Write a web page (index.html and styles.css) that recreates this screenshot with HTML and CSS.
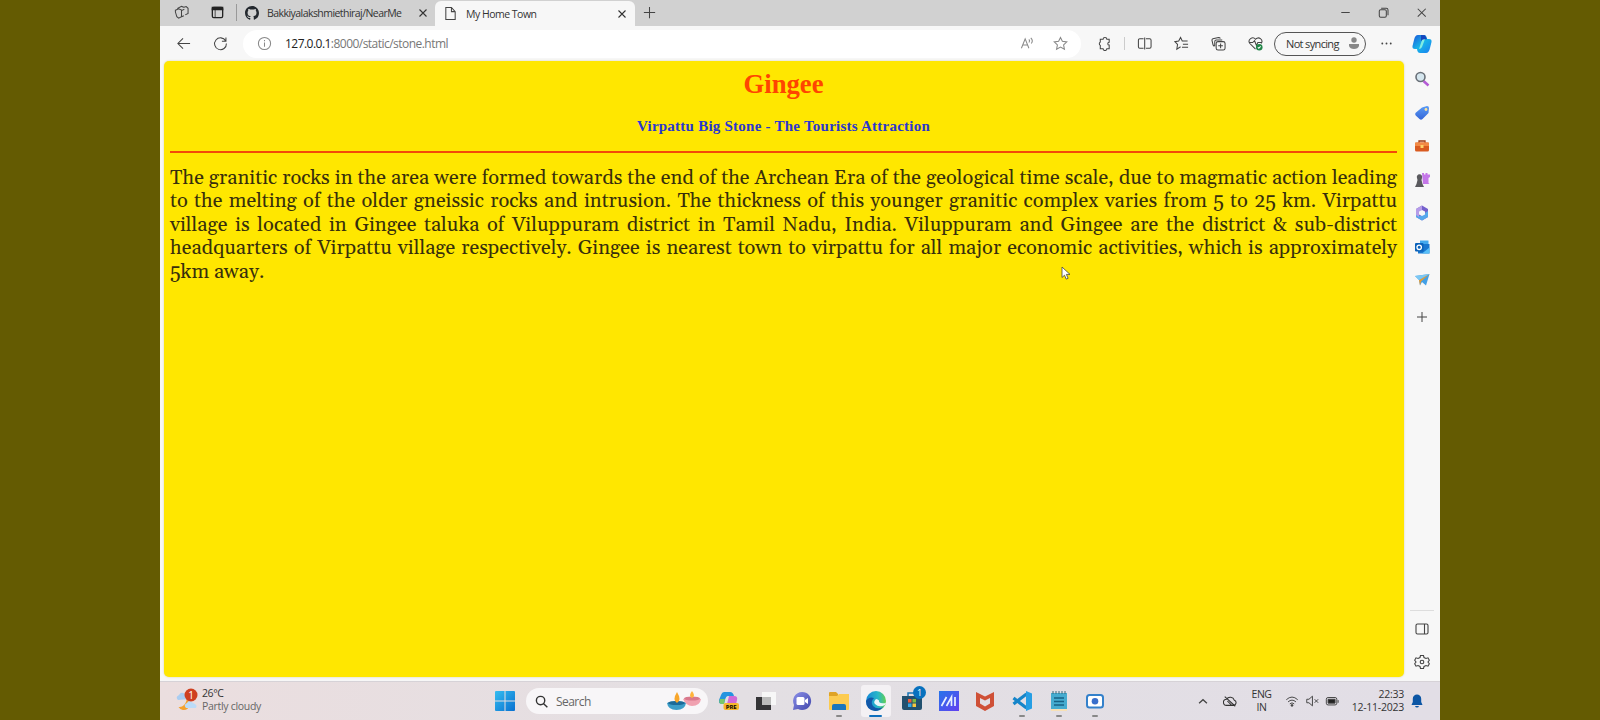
FILE: index.html
```html
<!DOCTYPE html>
<html lang="en">
<head>
<meta charset="utf-8">
<title>My Home Town</title>
<link rel="stylesheet" href="styles.css">
</head>
<body>
<svg width="0" height="0" class="defs">
  <defs>
    <linearGradient id="win" x1="0" y1="0" x2="1" y2="1"><stop offset="0" stop-color="#35bdf0"/><stop offset="1" stop-color="#0870d0"/></linearGradient>
    <linearGradient id="violet" x1="0" y1="0" x2="1" y2="1"><stop offset="0" stop-color="#8b8fe8"/><stop offset="1" stop-color="#4248ac"/></linearGradient>
    <linearGradient id="asus" x1="0" y1="0" x2="1" y2="1"><stop offset="0" stop-color="#2674ea"/><stop offset="1" stop-color="#6340f0"/></linearGradient>
    <linearGradient id="cop" x1="0" y1="0" x2="1" y2="1"><stop offset="0" stop-color="#1c54d8"/><stop offset=".5" stop-color="#18b4e8"/><stop offset="1" stop-color="#1a7cf0"/></linearGradient>
    <linearGradient id="edge" x1="0" y1="0" x2="1" y2="0"><stop offset="0" stop-color="#1588d8"/><stop offset=".6" stop-color="#28b8c8"/><stop offset="1" stop-color="#62cf52"/></linearGradient>
    <linearGradient id="tag" x1="0" y1="0" x2="0" y2="1"><stop offset="0" stop-color="#5b9cf5"/><stop offset="1" stop-color="#3566d8"/></linearGradient>
  </defs>
</svg>
<div class="screen">
  <header class="tabs">
    <span class="cell w44"><svg class="ic" viewBox="0 0 16 16"><path d="M1.500 5.500 5 4l3 1.500v7L5 14l-2-1.500-1.500-5zM4 4.300V3.500L8 1.500l2.500 1M8 6l3-1.500M8 12.500l2.500-1M10.500 2.500l2.500-.8 2 1.800v5.500l-3 1.500"/></svg></span>
    <span class="cell w28"><svg class="ic bold" viewBox="0 0 16 16"><rect x="2.500" y="2.500" width="11" height="11" rx="1.500"/><path d="M2.500 2.500h11v2.500h-11z" fill="#222"/><path stroke-width=".8" d="M5.500 5v8"/></svg></span>
    <i class="vline"></i>
    <div class="tab idle">
      <svg class="gh" viewBox="0 0 16 16"><path fill="#24292f" d="M8 0C3.580 0 0 3.580 0 8c0 3.540 2.290 6.530 5.470 7.590.4.070.55-.17.55-.38v-1.490c-2.010.37-2.530-.49-2.690-.94-.09-.23-.48-.94-.82-1.130-.28-.15-.68-.52-.01-.53.63-.01 1.080.58 1.230.82.72 1.210 1.870.87 2.330.66.07-.52.28-.87.51-1.070-1.780-.2-3.640-.89-3.640-3.950 0-.87.31-1.590.82-2.150-.08-.2-.36-1.020.08-2.120 0 0 .67-.21 2.200.82a7.600 7.600 0 0 1 4 0c1.530-1.040 2.200-.82 2.200-.82.44 1.100.16 1.920.08 2.120.51.56.82 1.270.82 2.150 0 3.070-1.870 3.750-3.650 3.950.29.25.54.73.54 1.480v2.200c0 .21.15.46.55.38A8 8 0 0 0 16 8c0-4.420-3.580-8-8-8z"/></svg>
      <span class="t1">Bakkiyalakshmiethiraj/NearMe</span>
      <svg class="x" viewBox="0 0 10 10"><path d="m1.500 1.500 7 7m0-7-7 7"/></svg>
    </div>
    <div class="tab active">
      <svg class="ic" viewBox="0 0 16 16"><path d="M3 1.500h6L13 6v8.500H3zM9 1.500V6h4"/></svg>
      <span class="t2">My Home Town</span>
      <svg class="x" viewBox="0 0 10 10"><path d="m1.500 1.500 7 7m0-7-7 7"/></svg>
    </div>
    <span class="cell w30"><svg class="ic" viewBox="0 0 16 16"><path d="M8 2v12M2 8h12"/></svg></span>
    <div class="winbtns">
      <span class="cell w38"><svg class="ic" viewBox="0 0 16 16"><path d="M3.500 8h9"/></svg></span>
      <span class="cell w38"><svg class="ic" viewBox="0 0 16 16"><rect x="3.500" y="5" width="7.500" height="8" rx="1.500"/><path d="M5.500 3.500H11a1.800 1.800 0 0 1 1.800 1.800V11"/></svg></span>
      <span class="cell w38"><svg class="ic" viewBox="0 0 16 16"><path d="m4 4 8.500 8.500m0-8.500L4 12.500"/></svg></span>
    </div>
  </header>

  <div class="toolbar">
    <span class="cell w46"><svg class="ic" viewBox="0 0 16 16"><path d="M15 8H2m5.500-5.500L2 8l5.500 5.500"/></svg></span>
    <span class="cell w28"><svg class="ic" viewBox="0 0 16 16"><path d="M13.500 5.200A6.300 6.300 0 1 0 14.300 8M13.800 1.500v4H9.500"/></svg></span>
    <div class="address">
      <svg class="ic pale" viewBox="0 0 16 16"><circle cx="8" cy="8" r="6.500"/><path d="M8 7v4.500M8 4.300v1.200"/></svg>
      <span class="url"><b>127.0.0.1</b>:8000/static/stone.html</span>
      <svg class="ic pale reader" viewBox="0 0 16 16"><path d="m1.500 13 4-10 4 10M3 9.500h5M9.500 3.500q1.500 1.500 0 3.500M11.500 2q3 3 .500 6"/></svg>
      <svg class="ic pale" viewBox="0 0 16 16"><path d="m8 1.500 2 4.200 4.700.6-3.400 3.200.9 4.700L8 11.900l-4.200 2.300.9-4.700L1.300 6.300 6 5.700z"/></svg>
    </div>
    <span class="cell w38"><svg class="ic" viewBox="0 0 16 16"><path d="M3.500 3.500h3a2 2 0 0 1 4 0H13v3.200a1.500 1.500 0 0 0 0 3v3.800h-2.500a2 2 0 0 1-4 0h-3V10a2 2 0 0 1 0-3.500z"/></svg></span>
    <i class="tline"></i>
    <span class="cell w37"><svg class="ic" viewBox="0 0 16 16"><path d="M7 3H3a1.500 1.500 0 0 0-1.500 1.500v7A1.500 1.500 0 0 0 3 13h4M9.500 3h4A1.500 1.500 0 0 1 15 4.500v7a1.500 1.500 0 0 1-1.500 1.500h-4M8.200 1.500v13"/></svg></span>
    <span class="cell w37"><svg class="ic" viewBox="0 0 16 16"><path d="M7 11.500 3 14l.8-5L1 6l4-.6L7 1.500l1.800 3.900h5.700M9.500 8.700h5.500M8.500 12H15"/></svg></span>
    <span class="cell w37"><svg class="ic" viewBox="0 0 16 16"><path d="M3.500 11 2.200 9.500 1 4.500Q1 3.300 2 3l6-1.500q1.500 0 2 1.200M4 11V6a1.700 1.700 0 0 1 1.700-1.700H12"/><rect x="5.500" y="6" width="9.500" height="9" rx="2"/><path d="M10.250 8v5M7.700 10.500h5"/></svg></span>
    <span class="cell w37"><svg class="ic" viewBox="0 0 16 16"><path d="M8 14 2 8a3.500 3.500 0 0 1 6-4.500A3.500 3.500 0 0 1 14 8M1 7h4l2-2 2 5 1.500-3H15"/><circle cx="12" cy="12" r="3.500" fill="#238548" stroke="none"/><path d="m10.500 12 1 1 2-2" stroke="#fff"/></svg></span>
    <div class="sync"><span>Not syncing</span><svg viewBox="0 0 10 12"><circle cx="5" cy="3" r="2.700"/><path d="M0 7h10v2q-1 3-5 3T0 9z"/></svg></div>
    <span class="cell w40"><svg class="ic" viewBox="0 0 16 16"><g fill="#444" stroke="none"><circle cx="3.500" cy="8" r="1"/><circle cx="8" cy="8" r="1"/><circle cx="12.500" cy="8" r="1"/></g></svg></span>
    <span class="cell w32"><svg class="big" viewBox="0 0 20 20"><path fill="url(#cop)" d="M6 1h6q2 0 2.600 2l.6 2H17q3 0 2.500 3l-1.500 6q-1 5-4 5H8q-2 0-2.600-2L5 15H3q-3 0-2.500-3L2 6q1-5 4-5z"/><path fill="#82ece2" d="m10 6-3 9q2 0 3-2l3-8q-2-1-3 1z"/><path fill="#1546bd" d="m9 1 4 .200 2 4h-3q-2 0-3 2z"/></svg></span>
  </div>

  <div class="middle">
    <main class="page">
      <h1>Gingee</h1>
      <h2>Virpattu Big Stone - The Tourists Attraction</h2>
      <hr>
      <div class="story">
        <p>The granitic rocks in the area were formed towards the end of the Archean Era of the geological time scale, due to magmatic action leading</p>
        <p>to the melting of the older gneissic rocks and intrusion. The thickness of this younger granitic complex varies from 5 to 25 km. Virpattu</p>
        <p>village is located in Gingee taluka of Viluppuram district in Tamil Nadu, India. Viluppuram and Gingee are the district &amp; sub-district</p>
        <p>headquarters of Virpattu village respectively. Gingee is nearest town to virpattu for all major economic activities, which is approximately</p>
        <p class="last">5km away.</p>
      </div>
      <svg class="cursor" viewBox="0 0 10 14"><path d="M1 1v10.500l2.500-2.300 1.700 3.900 1.900-.8-1.700-3.900H9z" fill="#fff" stroke="#444" stroke-width=".8"/></svg>
    </main>
    <aside class="side">
      <svg viewBox="0 0 16 16"><path d="m9.500 10 5 4.500" stroke="#b45bd5" stroke-width="2.500"/><circle cx="6.500" cy="6" r="4.500" fill="#d5e6ee" stroke="#697078" stroke-width="1.600"/></svg>
      <svg viewBox="0 0 16 16"><path fill="url(#tag)" d="M8 2.500 13 1q2 0 2 2l-.5 5-6 6q-1.500 1.500-3 0L1.700 10.500q-1.200-1.500 0-2.700z"/><circle cx="12" cy="4.500" r="1.400" fill="#ffe39a"/></svg>
      <svg viewBox="0 0 16 16"><path d="M5 5V3h6v2" fill="none" stroke="#9d3b15" stroke-width="1.300"/><rect x="1" y="4.500" width="14" height="9" rx="1.500" fill="#d95b20"/><path fill="#f28a45" d="M1 4.500h14V8H1z"/><rect x="6.500" y="7" width="3" height="3" fill="#ffd268"/></svg>
      <svg viewBox="0 0 16 16"><path fill="#c477e8" d="M8 1h2v1.500h1.500V1h2v1.500H16V5l-1.500 1v5l1 1H9z"/><path fill="#5a5a5e" d="M3 6a2.700 2.700 0 1 1 5 0L7.500 8l1 4 1.500 3H1l1.500-3 1-4z"/></svg>
      <svg viewBox="0 0 16 16"><path fill="#7460cc" d="m8 .500 6 3.500v8l-6 3.500-6-3.500V4z"/><path fill="#55a8ec" d="m8 15.500-6-3.500V9l4 2 8-5v6z"/><path fill="#b69ce8" d="m2 4 6-3.500V5L5 7v5l-3-2z"/><path fill="#f7f7f7" d="m8 5 3 1.500v3L8 11 5 9.500v-3z"/></svg>
      <svg viewBox="0 0 16 16"><path fill="#42a8ee" d="M6 1.500h8.500V8H6z"/><path fill="#1976cf" d="M4 5h11.500v9.500H4z"/><path fill="#58bff8" d="m8 14.500 7.500-6v6z"/><rect x="1" y="4" width="8.500" height="8.500" rx="1" fill="#0b62ba"/><circle cx="5.200" cy="8.300" r="2.200" fill="none" stroke="#fff" stroke-width="1.300"/></svg>
      <svg viewBox="0 0 16 16"><path fill="#43a0e6" d="M1 4 15.500 2 12 13.500 8 10l-2 3.500L5 8z"/><path fill="#e99b2f" d="M5 8 15.500 2 7 9.500l-1 4z"/><path fill="#7cc8f4" d="M1 4 15.500 2 5 8z"/></svg>
      <svg class="plus" viewBox="0 0 16 16"><path d="M8 3v10M3 8h10" fill="none" stroke="#444"/></svg>
      <i></i>
      <svg class="line" viewBox="0 0 16 16"><rect x="2" y="3" width="12" height="10" rx="1.500"/><path d="M10.500 3v10"/></svg>
      <svg class="line" viewBox="0 0 16 16"><path d="m6.500 1.500-.5 2-2 1-2-.7L.7 6.200 2 8l-1.300 1.800L2 12.200l2-.7 2 1 .5 2h3l.5-2 2-1 2 .7 1.300-2.400L14 8l1.300-1.800L14 3.800l-2 .7-2-1-.5-2z"/><circle cx="8" cy="8" r="1.800"/></svg>
    </aside>
  </div>

  <footer class="taskbar">
    <div class="weather">
      <svg viewBox="0 0 22 24"><path d="M11 11a6 6 0 1 1-8.500 8q6 1 8.500-8z" fill="#f4a22e"/><path fill="#a9cdf2" d="M2 12q-3-3 1-5 2-4 6-1 5 0 4 5z"/><path fill="#bcdcf8" d="M10 20q-3-3 1-5 2-4 6 0 5 2 3 5z"/><circle cx="15" cy="7" r="6.500" fill="#cf4020"/><text x="15" y="10.500" text-anchor="middle" font-size="10" fill="#fff">1</text></svg>
      <div><span class="deg">26°C</span><span class="pc">Partly cloudy</span></div>
    </div>
    <svg class="start" viewBox="0 0 20 20"><path fill="url(#win)" d="M0 1q0-1 1-1h8.500v9.500H0zM10.500 0H19q1 0 1 1v8.500h-9.500zM0 10.500h9.500V20H1q-1 0-1-1zM10.500 10.500H20V19q0 1-1 1h-8.500z"/></svg>
    <div class="search">
      <svg class="glass" viewBox="0 0 14 14"><circle cx="6" cy="6" r="4.500"/><path d="m9.300 9.300 4 4"/></svg>
      <span>Search</span>
      <svg class="lamps" viewBox="0 0 34 20"><path fill="#f0a1b0" d="M16 8q9-3 18 0-1 7-9 7-6 0-9-7z"/><ellipse cx="25" cy="7.500" rx="8" ry="2" fill="#d9788c"/><path fill="#ffb33b" d="M25 0q4 5 0 7-4-2 0-7z"/><path fill="#3b9dc8" d="M0 12q9-4 19 0-1 7-9.500 7T0 12z"/><ellipse cx="9.500" cy="12" rx="8.500" ry="2" fill="#1c6a98"/><path fill="#f8a62b" d="M10 1q5 8 0 11-5-3 0-11z"/></svg>
    </div>
    <div class="apps">
      <span><svg viewBox="0 0 20 20"><path fill="#2494df" d="M5 1h6q3 0 4 4H9q-2 0-3 4l-1 4H3q-4 0-3-4l2-5q1-3 3-3z"/><path fill="#78c86a" d="M1 8h5l-1 5H3q-4 0-2-5z"/><path fill="#cf6ad6" d="M10 5h5q4 0 3 4l-1 4H8z"/><rect x="4.500" y="12" width="15.500" height="7" rx="2" fill="#f7b72c"/><text x="12.200" y="17.800" text-anchor="middle" font-size="6" font-weight="700">PRE</text></svg></span>
      <span><svg viewBox="0 0 20 20"><path fill="#f7f7f7" d="M6 1h14v13H6z"/><path fill="#343436" d="M0 6h15v13H0z"/><path fill="#bbb" d="M6 6h9v8H6z"/></svg></span>
      <span><svg viewBox="0 0 20 20"><path fill="url(#violet)" d="M10 1a9 9 0 1 1-4 17l-5 1 1-5a9 9 0 0 1 8-13z"/><rect x="4.500" y="6" width="8" height="8" rx="1.500" fill="#fff"/><path fill="#fff" d="m13 9 3-2v6l-3-2z"/></svg></span>
      <span class="run"><svg viewBox="0 0 20 20"><path fill="#dfa326" d="M0 2q0-1 1-1h6l2 2v4H0z"/><path fill="#fccb50" d="M0 5h8l2-2h10v15q0 1-1 1H1q-1 0-1-1z"/><path fill="#1976bd" d="M3 15q0-2 2-2h10q2 0 2 2v4H3z"/></svg></span>
      <span class="run on"><svg viewBox="0 0 20 20"><circle cx="10" cy="10" r="10" fill="url(#edge)"/><path fill="#1258a9" d="M0 10q3-5 8-3-4 4-1 8 4 4 10 1-3 4-8 4-9-1-9-10z"/><path fill="#eaf7fa" d="M10 8q-3 3-1 5 4 4 10 1l1-2q-5 1-7-1 1-2-3-3z"/></svg></span>
      <span><svg viewBox="0 0 20 20"><path d="M6 5V2h8v3" fill="none" stroke="#1976b7" stroke-width="1.500"/><path fill="#22506f" d="M0 5h20v12q0 2-2 2H2q-2 0-2-2z"/><path fill="#f05a37" d="M6 8h3.500v3.500H6z"/><path fill="#7dbb42" d="M10.500 8H14v3.500h-3.500z"/><path fill="#35a8e9" d="M6 12.500h3.500V16H6z"/><path fill="#f8c740" d="M10.500 12.500H14V16h-3.500z"/></svg><b class="badge">1</b></span>
      <span><svg viewBox="0 0 20 20"><path fill="url(#asus)" d="M0 0h20v20H0z"/><path d="m2.500 15 5-9M7.500 15l5-9v9M16 6v9" fill="none" stroke="#e8f0ff" stroke-width="1.700"/></svg></span>
      <span><svg viewBox="0 0 20 20"><path fill="#cf5037" d="m1 1 9 4.500L19 1v14l-9 5-9-5zm4 6v5.500l5 3 5-3V7l-5 2.500z"/></svg></span>
      <span class="run"><svg viewBox="0 0 20 20"><path d="m1.500 7 13 10M1.500 13l13-10" stroke="#1685c9" stroke-width="3.200"/><path fill="#269ee4" d="m14 0 6 2.500v15L14 20z"/></svg></span>
      <span class="run"><svg viewBox="0 0 20 20"><path fill="#45acd0" d="M2 2h16v16H2z"/><path fill="#f7e0b5" d="M2 18h16v2H2z"/><path d="M5 7h10M5 10.500h10M5 14h10" stroke="#176285" stroke-width="1.300"/><path d="M4 0v3m3-3v3m3-3v3m3-3v3m3-3v3" stroke="#376b7e"/></svg></span>
      <span class="run"><svg viewBox="0 0 20 20"><rect x="2" y="4" width="16" height="12.500" rx="2.500" fill="#fff" stroke="#3481cb" stroke-width="2"/><circle cx="10" cy="10.200" r="3.300" fill="#396fcb"/></svg></span>
    </div>
    <div class="tray">
      <span class="cell w26"><svg class="ic" viewBox="0 0 16 16"><path d="m3.500 10.500 4.500-4 4.500 4" stroke-width="1.400"/></svg></span>
      <span class="cell w28"><svg class="ic cloud" viewBox="0 0 16 16"><path d="M4 13h8a3 3 0 0 0 1-5.800A5 5 0 0 0 4 6a3.500 3.500 0 0 0 0 7zM2 3l12 11M5 8l5 5"/></svg></span>
      <div class="lang"><span>ENG</span><span>IN</span></div>
      <span class="cell w20"><svg class="ic" viewBox="0 0 16 16"><path d="M1.500 6.500q6.500-6 13 0M3.500 9q4.500-4 9 0M5.500 11.300q2.500-2.300 5 0"/><circle cx="8" cy="13" r="1" fill="#333"/></svg></span>
      <span class="cell w20"><svg class="ic" viewBox="0 0 16 16"><path d="M2 6h2.500l4-3.500v11L4.500 10H2zM11 6l4 4m0-4-4 4"/></svg></span>
      <span class="cell w20"><svg class="ic" viewBox="0 0 16 16"><rect x="1.500" y="4" width="12" height="8.500" rx="2"/><path fill="#222" d="M3.500 6h8v4.500h-8z"/><path d="M15 7v3"/></svg></span>
      <div class="clock"><span>22:33</span><span>12-11-2023</span></div>
      <svg class="bell" viewBox="0 0 12 14"><path fill="#0c56a5" d="M6 .500a4.200 4.200 0 0 1 4.200 4.200v3.300l1.300 3H.5l1.300-3V4.700A4.200 4.200 0 0 1 6 .500zM4 12h4q-.5 1.500-2 1.500T4 12z"/></svg>
    </div>
  </footer>
</div>
</body>
</html>
```
FILE: styles.css
```css
* { box-sizing: border-box; }
body { margin: 0; background: #645b02; font-family: "Open Sans", "Noto Sans", sans-serif; color: #333; }
.defs { position: absolute; }
.screen { width: 1280px; height: 720px; margin: 0 auto; background: #f7f7f7; display: flex; flex-direction: column; overflow: hidden; }
svg { display: block; flex: none; }
span { white-space: nowrap; }
.cell { display: flex; align-items: center; justify-content: center; flex: none; }
.w20 { width: 20px; } .w26 { width: 26px; } .w28 { width: 28px; } .w30 { width: 29px; } .w32 { width: 31px; }
.w37 { width: 37px; } .w38 { width: 38px; } .w40 { width: 40px; } .w44 { width: 43px; } .w46 { width: 46px; }
.ic { width: 15px; height: 15px; fill: none; stroke: #444; stroke-width: 1.1; }
.ic.bold { stroke: #222; stroke-width: 1.4; }
.ic.pale { stroke: #888; }
.big { width: 20px; height: 20px; }

.tabs { height: 26px; flex: none; background: #d1d1d1; display: flex; align-items: center; padding-bottom: 1px; }
.tabs .w28 { margin-right: 5px; }
.vline { width: 1px; height: 17px; background: #999; }
.tab { height: 26px; display: flex; align-items: center; font-size: 10.5px; }
.idle { width: 198px; padding: 0 7px 0 8px; }
.gh { width: 14px; height: 14px; margin-right: 8px; }
.tab .x { width: 10px; height: 10px; margin-left: auto; fill: none; stroke: #333; stroke-width: 1.1; }
.active { width: 200px; height: 25px; align-self: flex-end; margin-bottom: -1px; background: #f7f7f7; border-radius: 6px 6px 0 0; padding: 0 8px; }
.active .ic { margin-right: 8px; }
.t1 { letter-spacing: -0.55px; }
.t2 { letter-spacing: -0.5px; }
.winbtns { margin-left: auto; display: flex; }

.toolbar { height: 35px; flex: none; display: flex; align-items: center; }
.toolbar .w28 { margin-right: 9px; }
.address { width: 838px; height: 28px; background: #fff; border-radius: 14px; display: flex; align-items: center; padding: 0 13px 0 14px; }
.url { margin-left: 13px; font-size: 12px; color: #777; letter-spacing: -0.53px; }
.url b { font-weight: 400; color: #222; }
.reader { margin-left: auto; margin-right: 18px; }
.toolbar .w38 { width: 43px; padding-left: 3px; }
.tline { width: 1px; height: 13px; background: #ccc; margin-right: 1px; }
.sync { width: 92px; height: 24px; border: 1px solid #555; border-radius: 12px; display: flex; align-items: center; justify-content: space-between; padding: 0 6px 1px 11px; font-size: 11px; letter-spacing: -0.65px; }
.sync svg { width: 10px; height: 12px; fill: #888; }

.middle { height: 620px; flex: none; display: flex; }
.page { width: 1240px; height: 616px; margin-left: 4px; background: #ffe700; border-radius: 5px; padding: 0 7px 0 6px; position: relative; font-family: "Liberation Serif", serif; box-shadow: 0 0 2px #d8cf9b; }
h1 { margin: 0; padding-top: 8px; height: 52px; font-size: 26.7px; line-height: 31px; color: #ff4500; text-align: center; }
h2 { margin: 0; height: 38px; font-size: 15px; line-height: 27px; letter-spacing: 0.24px; color: #2a36cf; text-align: center; }
hr { margin: 0; border: 0; height: 2px; background: #f34a08; }
.story { padding-top: 13.5px; }
.story p { margin: 0; font-family: Gelasio, Georgia, "Liberation Serif", serif; font-size: 20.1px; line-height: 23.5px; height: 23.5px; color: #382f0c; text-align: justify; text-align-last: justify; white-space: nowrap; }
.story .last { text-align-last: left; }
.cursor { position: absolute; left: 897px; top: 205px; width: 10px; height: 14px; }
.side { width: 36px; height: 620px; display: flex; flex-direction: column; align-items: center; padding-top: 10px; }
.side svg { width: 16px; height: 16px; margin-bottom: 17.5px; }
.side .plus { margin-top: 3px; }
.side i { width: 24px; height: 1px; background: #ddd; margin-top: auto; margin-bottom: 10px; }
.side .line { fill: none; stroke: #444; stroke-width: 1.1; }
.side .line:last-child { margin-bottom: 11px; }

.taskbar { height: 39px; flex: none; background: linear-gradient(90deg, #ebdedf, #e3dfe3 45%, #e2dee6); border-top: 1px solid #d6d2d7; display: flex; align-items: center; }
.weather { width: 335px; padding: 0 0 2px 16px; display: flex; align-items: center; gap: 4px; font-size: 10.5px; line-height: 13px; }
.weather svg { width: 22px; height: 24px; }
.weather span { display: block; }
.deg { letter-spacing: -0.4px; }
.pc { color: #666; letter-spacing: -0.3px; }
.start { width: 20px; height: 20px; }
.search { width: 182px; height: 26px; margin-left: 11px; border-radius: 13px; background: #f8f6f8; display: flex; align-items: center; padding: 0 7px 0 9px; font-size: 12px; color: #666; }
.glass { width: 13px; height: 13px; fill: none; stroke: #333; stroke-width: 1.5; margin-right: 8px; }
.search span { letter-spacing: -0.55px; }
.lamps { width: 34px; height: 20px; margin-left: auto; }
.apps { display: flex; margin-left: 3px; }
.apps > span { width: 36.6px; height: 38px; display: flex; align-items: center; justify-content: center; position: relative; }
.apps svg { width: 20px; height: 20px; }
.run::after { content: ""; position: absolute; bottom: 3px; width: 6px; height: 2px; border-radius: 1px; background: #888; }
.on::before { content: ""; position: absolute; width: 30px; height: 32px; background: #f4f1f4; border-radius: 3px; }
.on svg { position: relative; }
.run.on::after { width: 13px; background: #0e6fbd; }
.badge { position: absolute; left: 19px; top: 4px; width: 13px; height: 13px; border-radius: 50%; background: #0871be; color: #fff; font-size: 9px; line-height: 13px; text-align: center; font-weight: 400; }
.tray { margin-left: auto; display: flex; align-items: center; padding-right: 17px; font-size: 10.5px; line-height: 13px; }
.tray .ic { width: 14px; height: 14px; }
.tray .cloud { stroke: #333; stroke-width: 1.2; }
.lang { width: 38px; padding-right: 3px; display: flex; flex-direction: column; align-items: center; letter-spacing: -0.5px; }
.clock { width: 62px; display: flex; flex-direction: column; align-items: flex-end; letter-spacing: -0.25px; }
.bell { width: 12px; height: 14px; margin-left: 7px; }
.lang, .clock { padding-bottom: 1px; }
```
